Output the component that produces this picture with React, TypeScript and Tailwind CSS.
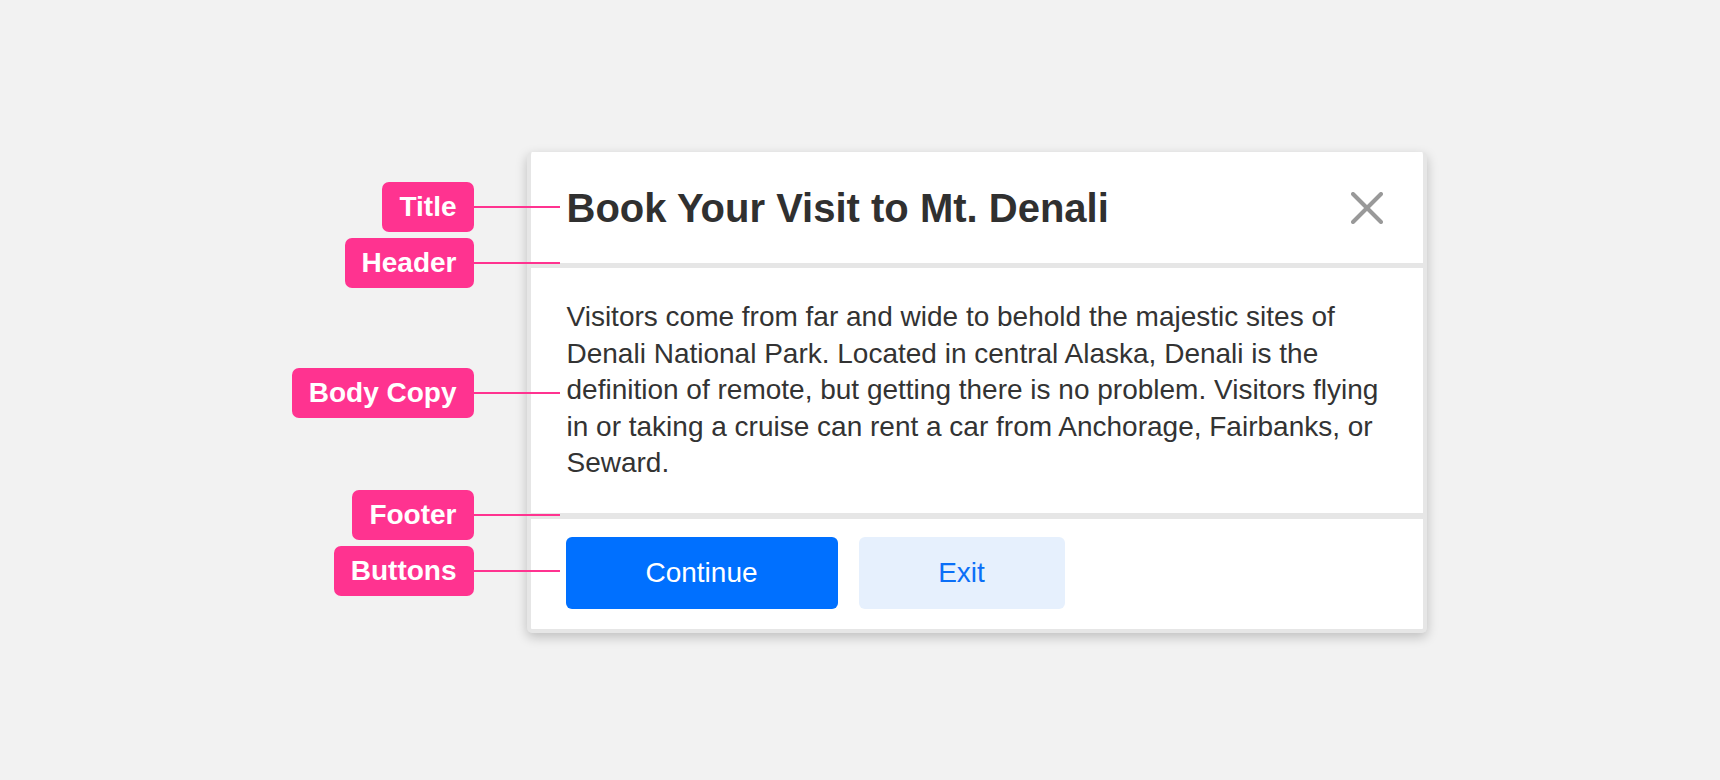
import React from 'react';

const callouts = [
  { label: 'Title', mt: 'mt-[30px]' },
  { label: 'Header', mt: 'mt-[6px]' },
  { label: 'Body Copy', mt: 'mt-[80px]' },
  { label: 'Footer', mt: 'mt-[72px]' },
  { label: 'Buttons', mt: 'mt-[6px]' },
];

function Callout({ label, mt }: { label: string; mt: string }) {
  return (
    <div className={`flex items-center justify-end ${mt}`}>
      <div className="h-[50px] px-[17px] flex items-center whitespace-nowrap rounded-[7px] bg-[#ff3390] text-white text-[28px] font-bold leading-none">
        {label}
      </div>
      <div className="w-[86px] h-[2px] shrink-0 bg-[#ff3390]" />
    </div>
  );
}

function CloseIcon() {
  return (
    <svg width="32" height="32" viewBox="0 0 32 32" fill="none" stroke="#999999" strokeWidth="4" strokeLinecap="round">
      <path d="M2 2 L30 30" />
      <path d="M30 2 L2 30" />
    </svg>
  );
}

export default function App() {
  return (
    <div
      className="w-full h-[780px] bg-[#f2f2f2] flex justify-center pt-[152px]"
      style={{ fontFamily: '"Liberation Sans", Arial, sans-serif' }}
    >
      <div className="flex items-start">
        {/* Annotations */}
        <div className="relative z-10 w-[290px] -ml-[24px] -mr-[33px] flex flex-col">
          {callouts.map((c) => (
            <Callout key={c.label} label={c.label} mt={c.mt} />
          ))}
        </div>

        {/* Dialog */}
        <div className="w-[900px] bg-white rounded-[5px] border-x-4 border-b-4 border-[#e6e6e6] shadow-[0_4px_12px_rgba(0,0,0,0.22)] flex flex-col">
          <div className="h-[111px] pl-[36px] pr-[40px] flex items-center justify-between">
            <h1 className="text-[40px] font-bold text-[#303030] leading-none">Book Your Visit to Mt. Denali</h1>
            <CloseIcon />
          </div>
          <div className="h-[5px] bg-[#e6e6e6]" />
          <div className="px-[36px] py-[31px]">
            <p className="text-[28px] leading-[36.5px] text-[#333333]">
              Visitors come from far and wide to behold the majestic sites of Denali National Park. Located in central
              Alaska, Denali is the definition of remote, but getting there is no problem. Visitors flying in or taking a
              cruise can rent a car from Anchorage, Fairbanks, or Seward.
            </p>
          </div>
          <div className="h-[6px] bg-[#e6e6e6]" />
          <div className="h-[110px] pt-[18px] pl-[35px] flex items-start gap-[21px]">
            <button className="w-[272px] h-[72px] rounded-[6px] bg-[#0070ff] text-white text-[28px]">Continue</button>
            <button className="w-[206px] h-[72px] rounded-[6px] bg-[#e6f0fd] text-[#0b6ff7] text-[28px]">Exit</button>
          </div>
        </div>
      </div>
    </div>
  );
}
